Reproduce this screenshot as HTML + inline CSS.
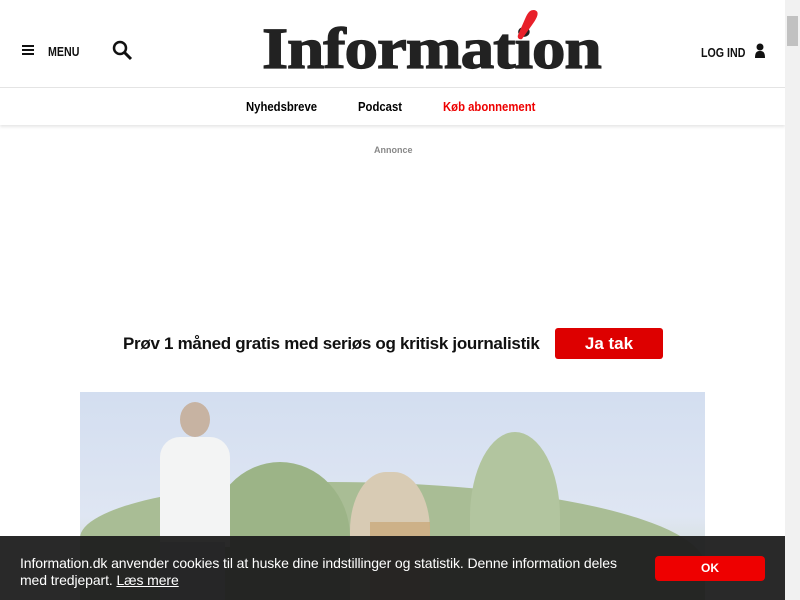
<!DOCTYPE html>
<html><head><meta charset="utf-8"><style>
*{margin:0;padding:0;box-sizing:border-box}
body{width:800px;height:600px;overflow:hidden;background:#fff;font-family:"Liberation Sans",sans-serif;position:relative}
.sb{position:absolute;right:0;top:0;width:15px;height:600px;background:#f1f1f1}
.sb .th{position:absolute;left:2px;top:16px;width:11px;height:30px;background:#c1c1c1}
.hdr{position:absolute;left:0;top:0;width:785px;height:88px;border-bottom:1px solid #e5e5e5}
.nav{position:absolute;left:0;top:88px;width:785px;height:37px;box-shadow:0 2px 3px rgba(0,0,0,.1);font-size:13px;font-weight:bold}
.nav span{position:absolute;top:11px;transform:scaleX(.87);transform-origin:left}
.t{position:absolute;font-weight:bold;font-size:13px;color:#111;transform:scaleX(.82);transform-origin:left}
</style></head><body>
<div class="hdr">
 <div style="position:absolute;left:22px;top:45px;width:12px;height:2px;background:#111;box-shadow:0 4px 0 #111,0 8px 0 #111"></div>
 <div class="t" style="left:48px;top:44px">MENU</div>
 <svg style="position:absolute;left:112px;top:40px" width="22" height="22"><circle cx="8" cy="8" r="6" fill="none" stroke="#111" stroke-width="2.5"/><line x1="12" y1="12" x2="19" y2="19" stroke="#111" stroke-width="3"/></svg>
 <div style="position:absolute;left:262px;top:20px;font-family:'Liberation Serif',serif;font-weight:bold;font-size:58px;color:#222;letter-spacing:-1px;transform:scaleX(1.16);transform-origin:left;line-height:58px;-webkit-text-stroke:1.2px #222">Information</div>
 <svg style="position:absolute;left:512px;top:9px" width="28" height="32"><path d="M22 1 C28 2 26 8 20 16 L10 30 C7 31 5 29 6 26 L13 10 C16 3 18 1 22 1Z" fill="#e8202a"/></svg>
 <div class="t" style="left:701px;top:45px">LOG IND</div>
 <svg style="position:absolute;left:754px;top:43px" width="12" height="16"><circle cx="6" cy="4" r="3.5" fill="#111"/><path d="M1 15 C1 9 3 8 6 8 C9 8 11 9 11 15Z" fill="#111"/></svg>
</div>
<div class="nav"><span style="left:246px">Nyhedsbreve</span><span style="left:358px">Podcast</span><span style="left:443px;color:#e00">Køb abonnement</span></div>
<div style="position:absolute;left:374px;top:145px;font-size:9px;color:#888;font-weight:bold">Annonce</div>
<div style="position:absolute;left:123px;top:334px;font-size:17px;font-weight:bold;color:#111;letter-spacing:-.3px">Prøv 1 måned gratis med seriøs og kritisk journalistik</div>
<div style="position:absolute;left:555px;top:328px;width:108px;height:31px;background:#d00;border-radius:3px;color:#fff;font-size:17px;font-weight:bold;text-align:center;line-height:31px">Ja tak</div>
<div style="position:absolute;left:80px;top:392px;width:625px;height:208px;overflow:hidden;background:linear-gradient(#d3def0,#dfe6f3 60%,#cdd8c0)">
 <div style="position:absolute;left:0;top:90px;width:625px;height:140px;background:#a9bd95;border-radius:40% 60% 0 0"></div>
 <div style="position:absolute;left:130px;top:70px;width:140px;height:150px;background:#9cb487;border-radius:50% 50% 0 0"></div>
 <div style="position:absolute;left:390px;top:40px;width:90px;height:170px;background:#b2c59f;border-radius:50% 50% 10% 10%"></div>
 <div style="position:absolute;left:80px;top:45px;width:70px;height:110px;background:#f3f4f4;border-radius:20px 20px 0 0"></div>
 <div style="position:absolute;left:100px;top:10px;width:30px;height:35px;background:#c7b3a2;border-radius:50%"></div>
 <div style="position:absolute;left:80px;top:150px;width:65px;height:60px;background:#b7c4d5"></div>
 <div style="position:absolute;left:270px;top:80px;width:80px;height:130px;background:#d8cbb4;border-radius:45% 45% 0 0"></div>
 <div style="position:absolute;left:290px;top:130px;width:60px;height:80px;background:#c7a06a;opacity:.6"></div>
</div>
<div style="position:absolute;left:0;top:536px;width:785px;height:64px;background:rgba(30,30,30,.95)">
 <div style="position:absolute;left:20px;top:19px;width:620px;font-size:14px;line-height:17px;color:#fff;letter-spacing:-.1px">Information.dk anvender cookies til at huske dine indstillinger og statistik. Denne information deles med tredjepart. <u>Læs mere</u></div>
 <div style="position:absolute;left:655px;top:20px;width:110px;height:25px;background:#e00;border-radius:4px;color:#fff;font-weight:bold;font-size:12px;text-align:center;line-height:25px">OK</div>
</div>
<div class="sb"><div class="th"></div></div>
</body></html>
